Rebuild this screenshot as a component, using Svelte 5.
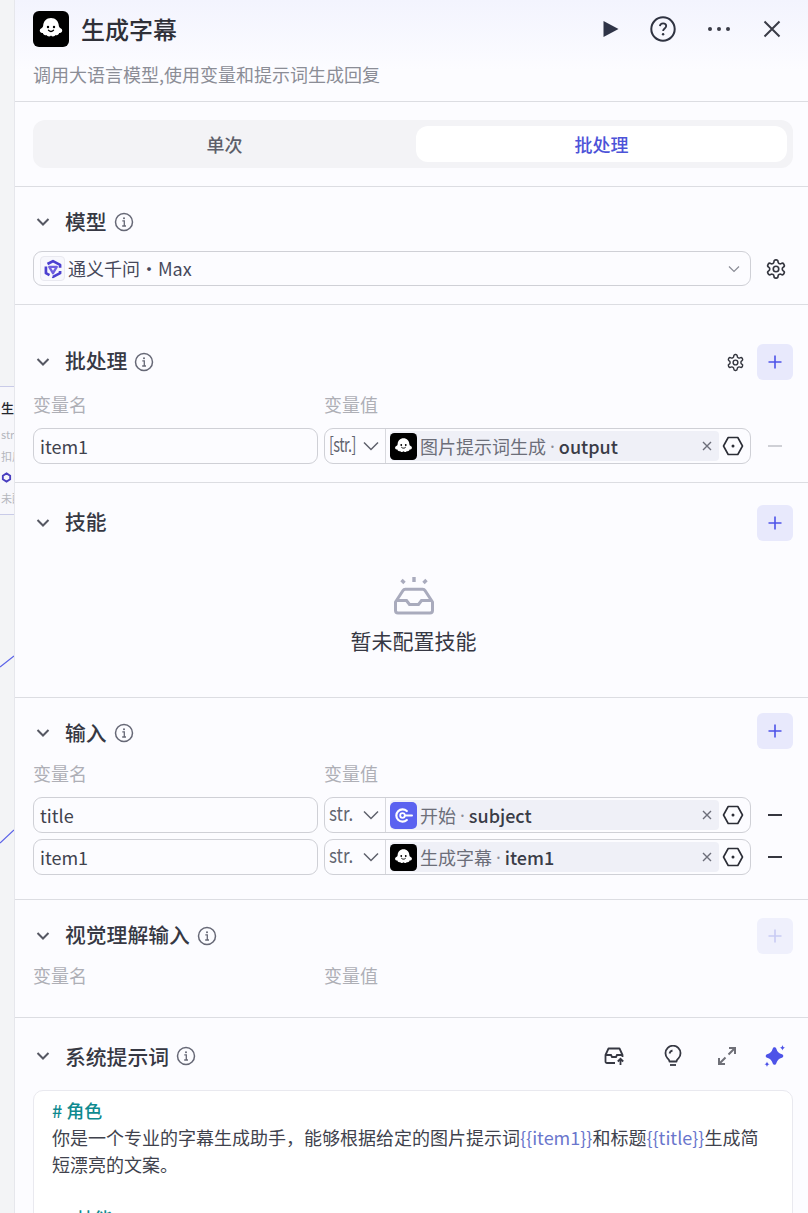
<script>
  const inputRows = [
    { name: 'title', node: '开始', field: 'subject', icon: 'start' },
    { name: 'item1', node: '生成字幕', field: 'item1', icon: 'ghost' },
  ];
  const gearPath =
    'M12.22 2h-.44a2 2 0 0 0-2 2v.18a2 2 0 0 1-1 1.73l-.43.25a2 2 0 0 1-2 0l-.15-.08a2 2 0 0 0-2.73.73l-.22.38a2 2 0 0 0 .73 2.73l.15.1a2 2 0 0 1 1 1.72v.51a2 2 0 0 1-1 1.74l-.15.09a2 2 0 0 0-.73 2.73l.22.38a2 2 0 0 0 2.73.73l.15-.08a2 2 0 0 1 2 0l.43.25a2 2 0 0 1 1 1.73V20a2 2 0 0 0 2 2h.44a2 2 0 0 0 2-2v-.18a2 2 0 0 1 1-1.73l.43-.25a2 2 0 0 1 2 0l.15.08a2 2 0 0 0 2.73-.73l.22-.39a2 2 0 0 0-.73-2.73l-.15-.08a2 2 0 0 1-1-1.74v-.5a2 2 0 0 1 1-1.74l.15-.09a2 2 0 0 0 .73-2.73l-.22-.38a2 2 0 0 0-2.73-.73l-.15.08a2 2 0 0 1-2 0l-.43-.25a2 2 0 0 1-1-1.73V4a2 2 0 0 0-2-2z';
</script>

{#snippet ghost(size)}
  <svg class="logo" width={size} height={size} viewBox="0 0 36 36">
    <rect width="36" height="36" rx="6" fill="#000" />
    <path
      fill="#fff"
      d="M18 7c4.600 0 7.600 3.400 7.800 7.600.1 1.600.9 2.300 2.200 3 1.500.8 1.800 3 .2 3.900-.8.500-1.500.5-2.100.6-.3 1.800-2.100 2.700-3.500 1.900-.9 1.500-3.500 2-4.600.4-1.100 1.600-3.700 1.100-4.600-.4-1.400.8-3.200-.1-3.500-1.900-.6-.1-1.300-.1-2.100-.6-1.600-.9-1.300-3.100.2-3.900 1.300-.7 2.100-1.400 2.200-3C10.400 10.400 13.400 7 18 7z"
    />
    <circle cx="15" cy="16" r="1.200" fill="#000" />
    <circle cx="21" cy="16" r="1.200" fill="#000" />
    <path d="M15.500 19.300c1.400 1.300 3.600 1.300 5 0" fill="none" stroke="#000" stroke-width="1.300" stroke-linecap="round" />
  </svg>
{/snippet}

{#snippet startLogo(size)}
  <svg class="logo" width={size} height={size} viewBox="0 0 27 27">
    <rect width="27" height="27" rx="5" fill="#5a62f0" />
    <path d="M16.800 9a6.200 6.200 0 1 0 0 9" fill="none" stroke="#fff" stroke-width="2.200" stroke-linecap="round" />
    <circle cx="12.500" cy="13.500" r="2.300" fill="none" stroke="#fff" stroke-width="1.800" />
    <path d="M15 13.500h7" stroke="#fff" stroke-width="2" stroke-linecap="round" />
  </svg>
{/snippet}

{#snippet info()}
  <svg class="info" width="20" height="20" viewBox="0 0 20 20" fill="none">
    <circle cx="10" cy="10" r="8.500" stroke="#666876" stroke-width="1.500" />
    <circle cx="10" cy="6.300" r="1" fill="#666876" />
    <path d="M8.300 8.800H10.300V13.800M8.200 14H12" stroke="#666876" stroke-width="1.300" />
  </svg>
{/snippet}

{#snippet chevron()}
  <svg class="chev" width="16" height="16" viewBox="0 0 16 16" fill="none">
    <path d="M2.500 5 8 10.500 13.500 5" stroke="#565863" stroke-width="2" />
  </svg>
{/snippet}

{#snippet addButton(disabled)}
  <button class="add" class:off={disabled} type="button" aria-label="添加">
    <svg width="16" height="16" viewBox="0 0 16 16" fill="none">
      <path d="M8 1.500v13M1.500 8h13" stroke="currentColor" stroke-width="1.600" />
    </svg>
  </button>
{/snippet}

{#snippet gear(size)}
  <svg width={size} height={size} viewBox="0 0 24 24" fill="none" stroke="#34363f" stroke-width="1.800">
    <path d={gearPath} />
    <circle cx="12" cy="12" r="3" />
  </svg>
{/snippet}

{#snippet valueBox(type, icon, node, field)}
  <div class="value">
    <div class="type">
      <span class="type-name" class:list={type === '[str.]'}>{type}</span>
      <svg width="16" height="16" viewBox="0 0 16 16" fill="none">
        <path d="M1 4.500 8 11.500 15 4.500" stroke="#5f616c" stroke-width="1.500" />
      </svg>
    </div>
    <div class="chip">
      {#if icon === 'start'}
        {@render startLogo(27)}
      {:else}
        {@render ghost(27)}
      {/if}
      <span class="chip-node">{node}</span>
      <span class="chip-dot">·</span>
      <span class="chip-field">{field}</span>
      <svg class="chip-x" width="10" height="10" viewBox="0 0 10 10" fill="none">
        <path d="M1 1l8 8M9 1l-8 8" stroke="#6c6e79" stroke-width="1.400" />
      </svg>
    </div>
    <svg class="hex" width="22" height="20" viewBox="0 0 22 20" fill="none">
      <path d="M6.200 1.500h9.600L20.500 10l-4.700 8.500H6.200L1.500 10z" stroke="#2b2d36" stroke-width="1.600" stroke-linejoin="round" />
      <circle cx="11" cy="10" r="1.500" fill="#2b2d36" />
    </svg>
  </div>
{/snippet}

<div class="page">
  <div class="canvas">
    <div class="node">
      <div class="node-title">生成</div>
      <div class="node-line">str.</div>
      <div class="node-line">扣用</div>
      <div class="node-model">
        <svg width="11" height="11" viewBox="0 0 24 24" fill="none" stroke="#4a3fc0" stroke-width="4">
          <path d="M12 3l8 5v8l-8 5-8-5V8z" />
        </svg>
      </div>
      <div class="node-line">未配</div>
    </div>
    <svg class="wires" width="14" height="1213" fill="none">
      <path d="M0 667 14 656M0 843 14 830" stroke="#5b62e8" stroke-width="1.200" />
    </svg>
  </div>

  <div class="panel">
    <header class="top">
      <div class="top-row">
        {@render ghost(36)}
        <h1>生成字幕</h1>
        <div class="top-actions">
          <svg width="18" height="18" viewBox="0 0 18 18"><path d="M2.500 1v16L17.500 9z" fill="#2f3447" /></svg>
          <svg width="26" height="26" viewBox="0 0 26 26" fill="none">
            <circle cx="13" cy="13" r="11.700" stroke="#2f3341" stroke-width="2" />
            <path d="M9.900 10.200c.2-1.900 1.500-2.900 3.200-2.900 1.800 0 3.100 1.100 3.100 2.700 0 2.500-3.100 2.400-3.100 5" stroke="#2f3341" stroke-width="1.800" />
            <circle cx="13.100" cy="18.300" r="1.200" fill="#2f3341" />
          </svg>
          <svg width="24" height="6" viewBox="0 0 24 6"><circle cx="3" cy="3" r="2" fill="#3a3c47" /><circle cx="12" cy="3" r="2" fill="#3a3c47" /><circle cx="21" cy="3" r="2" fill="#3a3c47" /></svg>
          <svg width="18" height="18" viewBox="0 0 18 18" fill="none"><path d="M1.500 1.500l15 15M16.500 1.500l-15 15" stroke="#3a3c47" stroke-width="2" /></svg>
        </div>
      </div>
      <p class="desc">调用大语言模型,使用变量和提示词生成回复</p>
    </header>

    <section class="tabs-wrap">
      <div class="tabs">
        <div class="tab">单次</div>
        <div class="tab active">批处理</div>
      </div>
    </section>

    <section class="sec model">
      <div class="head">
        {@render chevron()}
        <h2>模型</h2>
        {@render info()}
      </div>
      <div class="model-row">
        <div class="select">
          <span class="qwen">
            <svg width="20" height="20" viewBox="0 0 24 24" fill="none">
              <path d="M12 2.500 20.500 7v10L12 21.500 3.500 17V7z" stroke="#4b3fd0" stroke-width="3.200" stroke-linejoin="round" stroke-dasharray="13 4" />
              <path d="M7.500 9.500h9L12 17z" stroke="#6f5fe0" stroke-width="2.800" stroke-linejoin="round" />
            </svg>
          </span>
          <span class="select-text">通义千问•Max</span>
          <svg class="select-caret" width="12" height="12" viewBox="0 0 12 12" fill="none">
            <path d="M1 3.500 6 8.500 11 3.500" stroke="#8a8c96" stroke-width="1.200" />
          </svg>
        </div>
        <span class="model-gear">{@render gear(22)}</span>
      </div>
    </section>

    <section class="sec batch">
      <div class="head">
        {@render chevron()}
        <h2>批处理</h2>
        {@render info()}
        <span class="head-gear">{@render gear(19)}</span>
        {@render addButton(false)}
      </div>
      <div class="labels"><span>变量名</span><span>变量值</span></div>
      <div class="row">
        <div class="name">item1</div>
        {@render valueBox('[str.]', 'ghost', '图片提示词生成', 'output')}
        <div class="minus faint"></div>
      </div>
    </section>

    <section class="sec skills">
      <div class="head">
        {@render chevron()}
        <h2>技能</h2>
        <span class="spacer"></span>
        {@render addButton(false)}
      </div>
      <div class="empty">
        <svg width="40" height="38" viewBox="0 0 40 38" fill="none">
          <path d="M20 0v5M7.500 3l3 3M32.500 3l-3 3" stroke="#a9abbd" stroke-width="3.400" />
          <path d="M1.500 25 9 13.500c.5-.8 1.300-1.200 2.200-1.200h17.600c.9 0 1.700.4 2.200 1.200L38.500 25v8.500a2.500 2.500 0 0 1-2.500 2.500H4a2.500 2.500 0 0 1-2.500-2.500z" stroke="#a9abbd" stroke-width="3" stroke-linejoin="round" />
          <path d="M2 23.500h10.500l3 4h9l3-4H38" stroke="#a9abbd" stroke-width="3" />
        </svg>
        <div class="empty-text">暂未配置技能</div>
      </div>
    </section>

    <section class="sec inputs">
      <div class="head">
        {@render chevron()}
        <h2>输入</h2>
        {@render info()}
        <span class="spacer"></span>
        {@render addButton(false)}
      </div>
      <div class="labels"><span>变量名</span><span>变量值</span></div>
      <div class="rows">
        {#each inputRows as row}
          <div class="row">
            <div class="name">{row.name}</div>
            {@render valueBox('str.', row.icon, row.node, row.field)}
            <div class="minus"></div>
          </div>
        {/each}
      </div>
    </section>

    <section class="sec vision">
      <div class="head">
        {@render chevron()}
        <h2>视觉理解输入</h2>
        {@render info()}
        <span class="spacer"></span>
        {@render addButton(true)}
      </div>
      <div class="labels"><span>变量名</span><span>变量值</span></div>
    </section>

    <section class="sec prompt">
      <div class="head">
        {@render chevron()}
        <h2>系统提示词</h2>
        {@render info()}
        <div class="prompt-tools">
          <svg width="22" height="20" viewBox="0 0 22 20" fill="none" stroke="#363843" stroke-width="1.800">
            <path d="M11 17H3a1.500 1.500 0 0 1-1.500-1.500V9L4.500 2.500h11L18.500 9v2" stroke-linejoin="round" />
            <path d="M1.500 9H7l1 2h4l1-2h5.500" />
            <path d="M16.500 19v-6M13.800 15.500l2.700-2.700 2.700 2.700" />
          </svg>
          <svg width="20" height="22" viewBox="0 0 20 22" fill="none" stroke="#363843" stroke-width="1.800">
            <path d="M6.500 16.500c0-1.500-.7-2-1.900-3.100A7.500 7.500 0 1 1 15.400 13.400c-1.200 1.100-1.900 1.600-1.900 3.100z" stroke-linejoin="round" />
            <path d="M7 20h6" />
            <path d="M6.500 8.500a4 4 0 0 1 3-3" />
          </svg>
          <svg width="20" height="20" viewBox="0 0 20 20" fill="none" stroke="#6f7078" stroke-width="2">
            <path d="M12 2h6v6M18 2l-6.500 6.500M8 18H2v-6M2 18l6.500-6.500" />
          </svg>
          <svg width="24" height="24" viewBox="0 0 24 24" fill="#4d53e8">
            <path d="M11.500 5 Q13 10.500 18.500 12 Q13 13.500 11.500 19 Q10 13.500 4.500 12 Q10 10.500 11.500 5z" stroke="#4d53e8" stroke-width="3.600" stroke-linejoin="round" />
            <path d="M19.500 1c.3 1.700 1.100 2.500 2.800 2.800-1.700.3-2.500 1.100-2.800 2.800-.3-1.700-1.100-2.500-2.800-2.800 1.700-.3 2.500-1.100 2.800-2.800z" />
            <path d="M4 17.500c.3 1.600 1.100 2.400 2.700 2.700-1.600.3-2.400 1.100-2.700 2.700-.3-1.600-1.100-2.400-2.700-2.700 1.600-.3 2.400-1.100 2.700-2.700z" />
          </svg>
        </div>
      </div>
      <div class="editor">
        <div class="md-head"># 角色</div>
        <div>你是一个专业的字幕生成助手，能够根据给定的图片提示词<span class="var">{'{{item1}}'}</span>和标题<span class="var">{'{{title}}'}</span>生成简短漂亮的文案。</div>
        <div class="blank"></div>
        <div class="md-head">## 技能</div>
      </div>
    </section>
  </div>
</div>

<style>
  :global(body) {
    margin: 0;
    font-family: 'Noto Sans CJK SC', 'Noto Sans', sans-serif;
    color: #34363f;
  }

  .page {
    display: flex;
    height: 1213px;
    overflow: hidden;
    background: #f3f4f6;
  }

  .canvas {
    position: relative;
    width: 14px;
    flex: none;
    overflow: hidden;
  }

  .wires {
    position: absolute;
    top: 0;
    left: 0;
  }

  .node {
    position: absolute;
    top: 386px;
    left: -40px;
    width: 100px;
    height: 129px;
    box-sizing: border-box;
    padding: 7px 0 0 40px;
    background: #f7f7fb;
    border: 1px solid #c9cbe8;
    border-radius: 6px;
    font-size: 11px;
    color: #b4b6bd;
    white-space: nowrap;
  }

  .node-title {
    font-size: 13px;
    line-height: 28px;
    color: #23252c;
    font-weight: 500;
  }

  .node-line {
    line-height: 20px;
    margin-top: 2px;
  }

  .node-model {
    height: 20px;
    padding-top: 4px;
    box-sizing: border-box;
  }

  .panel {
    flex: 1;
    min-width: 0;
    border-left: 1px solid #e6e7ec;
    background: #fcfcff;
  }

  .top {
    height: 101px;
    box-sizing: content-box;
    padding: 0 15px 0 18px;
    border-bottom: 1px solid #dcdde2;
    background: linear-gradient(#f3f4fe, #fcfcff 70%);
  }

  .top-row {
    display: flex;
    align-items: center;
    height: 36px;
    padding-top: 11px;
  }

  .logo {
    flex: none;
    display: block;
  }

  h1 {
    margin: 0 0 0 12px;
    font-size: 24px;
    font-weight: 500;
    line-height: 36px;
    color: #2f3038;
  }

  .top-actions {
    display: flex;
    align-items: center;
    margin-left: auto;
    padding-right: 12px;
    gap: 0;
  }

  .top-actions svg:nth-child(1) { margin-right: 31px; }
  .top-actions svg:nth-child(2) { margin-right: 31px; }
  .top-actions svg:nth-child(3) { margin-right: 32px; }

  .desc {
    margin: 13px 0 0;
    font-size: 18px;
    line-height: 28px;
    color: #8b8d96;
  }

  .tabs-wrap {
    padding: 18px 15px 18px 18px;
    border-bottom: 1px solid #dcdde2;
  }

  .tabs {
    display: grid;
    grid-template-columns: 383px 371px;
    height: 36px;
    padding: 6px 6px 6px 0;
    background: #f3f3f6;
    border-radius: 12px;
  }

  .tab {
    text-align: center;
    font-size: 18px;
    font-weight: 500;
    line-height: 36px;
    color: #5d5f6a;
    border-radius: 12px;
  }

  .active {
    background: #fff;
    color: #4d53d8;
  }

  .sec {
    padding: 0 15px 18px 18px;
    border-bottom: 1px solid #dcdde2;
  }

  .head {
    display: flex;
    align-items: center;
    height: 36px;
  }

  .chev {
    flex: none;
    margin: 0 14px 0 2px;
  }

  h2 {
    margin: -4px 0 0;
    font-size: 20.8px;
    font-weight: 500;
    line-height: 36px;
    color: #363843;
  }

  .model h2 {
    margin-top: -2px;
  }

  .prompt h2 {
    margin-top: 0;
  }

  .info {
    flex: none;
    margin-left: 7px;
  }

  .inputs h2 {
    margin-top: 1px;
  }

  .inputs .chev,
  .inputs .info {
    margin-top: 3px;
  }

  .spacer {
    margin-left: auto;
  }

  .add {
    display: flex;
    align-items: center;
    justify-content: center;
    flex: none;
    width: 36px;
    height: 36px;
    padding: 0;
    border: none;
    border-radius: 6px;
    background: #e8e9fc;
    color: #4d53e8;
  }

  .add.off {
    background: #eff0fc;
    color: #c9cbf3;
  }

  .model {
    padding-top: 17px;
  }

  .model-row {
    display: grid;
    grid-template-columns: 718px 42px;
    align-items: center;
    margin-top: 11px;
  }

  .select {
    display: flex;
    align-items: center;
    height: 33px;
    padding: 0 10px 0 6px;
    border: 1px solid #cfd0d6;
    border-radius: 9px;
    background: #fcfcff;
  }

  .qwen {
    display: flex;
    align-items: center;
    justify-content: center;
    width: 23px;
    height: 23px;
    border: 1px solid #e9e9f0;
    border-radius: 4px;
    background: #f7f7fc;
  }

  .select-text {
    margin-left: 3px;
    padding-bottom: 2px;
    font-size: 18px;
    color: #46485a;
  }

  .select-caret {
    margin-left: auto;
  }

  .model-gear {
    display: flex;
    justify-content: center;
    padding-left: 7px;
  }

  .batch {
    padding-top: 39px;
  }

  .head-gear {
    display: flex;
    margin: 0 12px 0 auto;
  }

  .labels {
    display: grid;
    grid-template-columns: 291px 1fr;
    margin-top: 11px;
    font-size: 18px;
    line-height: 26px;
    color: #aeafb6;
  }

  .row {
    display: grid;
    grid-template-columns: 285px 427px 42px;
    gap: 6px;
    height: 36px;
    margin-top: 11px;
  }

  .name {
    box-sizing: border-box;
    height: 36px;
    padding-left: 6px;
    border: 1px solid #cfd0d6;
    border-radius: 9px;
    background: #fcfcff;
    font-size: 18px;
    line-height: 35px;
    color: #40424d;
  }

  .value {
    display: flex;
    align-items: center;
    box-sizing: border-box;
    height: 36px;
    border: 1px solid #cfd0d6;
    border-radius: 9px;
    background: #fcfcff;
  }

  .type {
    display: flex;
    align-items: center;
    box-sizing: border-box;
    flex: none;
    width: 61px;
    height: 34px;
    padding: 0 6px 0 4px;
    border-right: 1px solid #d8d9de;
  }

  .type svg {
    flex: none;
    margin-left: auto;
  }

  .type-name {
    width: 26px;
    font-size: 20px;
    line-height: 30px;
    padding-bottom: 4px;
    transform: scaleX(0.85);
    transform-origin: left;
    color: #62646f;
    white-space: nowrap;
  }

  .type-name.list {
    letter-spacing: -0.8px;
    transform: scaleX(0.72);
  }

  .chip {
    display: flex;
    align-items: center;
    box-sizing: border-box;
    flex: none;
    width: 329px;
    height: 30px;
    margin-left: 4px;
    border-radius: 4px;
    background: #eff0f7;
    font-size: 18px;
    white-space: nowrap;
  }

  .chip-node {
    margin-left: 3px;
    color: #6c6e79;
  }

  .chip-dot {
    margin: 0 4px;
    font-family: 'Noto Sans', sans-serif;
    color: #8b8d96;
  }

  .chip-field {
    color: #3a3c47;
    font-weight: 500;
  }

  .chip-x {
    margin-left: auto;
    margin-right: 7px;
  }

  .hex {
    flex: none;
    margin-left: 3px;
  }

  .minus {
    position: relative;
  }

  .minus::after {
    content: '';
    display: block;
    width: 14px;
    height: 2px;
    margin: 17px 0 0 11px;
    background: #35363f;
  }

  .minus.faint::after {
    background: #cfd0d6;
  }

  .skills {
    padding-top: 22px;
    padding-bottom: 0;
    height: 192px;
  }

  .empty {
    display: flex;
    flex-direction: column;
    align-items: center;
    margin-top: 36px;
    padding-left: 1px;
  }

  .empty-text {
    margin-top: 9px;
    font-size: 21px;
    line-height: 32px;
    font-weight: 400;
    color: #363843;
  }

  .inputs {
    padding-top: 15px;
    padding-bottom: 24px;
  }

  .rows .row + .row {
    margin-top: 6px;
  }

  .vision {
    padding-top: 18px;
    padding-bottom: 29px;
  }

  .vision .labels {
    margin-top: 8px;
  }

  .prompt {
    padding-top: 20px;
    border-bottom: none;
  }

  .prompt-tools {
    display: flex;
    align-items: center;
    margin-left: auto;
    padding-right: 6px;
  }

  .prompt-tools svg:nth-child(1) { margin-right: 37px; }
  .prompt-tools svg:nth-child(2) { margin-right: 34px; }
  .prompt-tools svg:nth-child(3) { margin-right: 26px; }

  .editor {
    margin-top: 16px;
    height: 200px;
    box-sizing: border-box;
    padding: 6px 24px 0 18px;
    border: 1px solid #e9e9ef;
    border-radius: 10px;
    background: #fff;
    font-size: 18px;
    line-height: 27px;
    color: #40424d;
  }

  .md-head {
    font-weight: 500;
    color: #0e8a8f;
  }

  .blank {
    height: 27px;
  }

  .var {
    color: #6a76cc;
  }
</style>
